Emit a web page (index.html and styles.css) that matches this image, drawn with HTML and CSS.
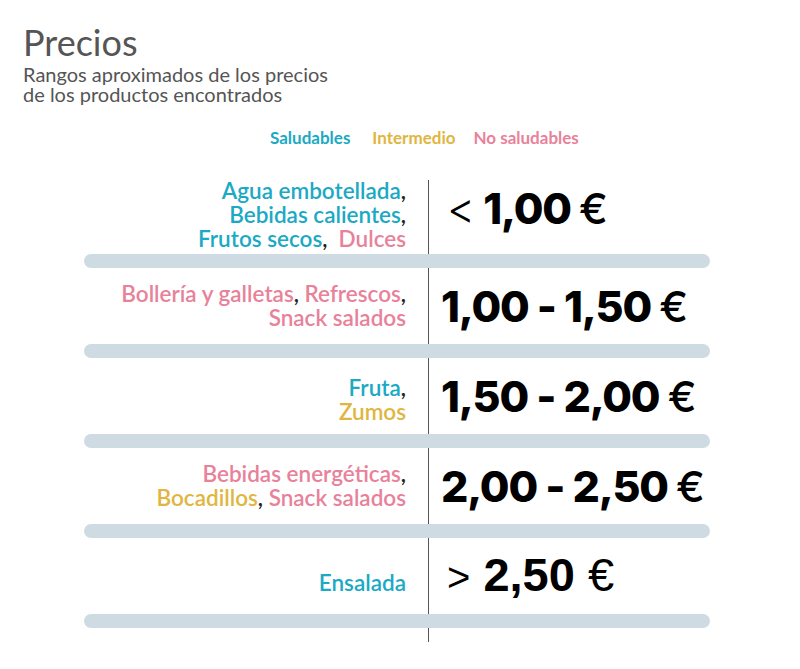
FILE: index.html
```html
<!DOCTYPE html>
<html lang="es">
<head>
<meta charset="utf-8">
<link rel="stylesheet" href="styles.css">
</head>
<body>
<header class="head">
  <h1 class="title">Precios</h1>
  <p class="subtitle">Rangos aproximados de los precios<br>de los productos encontrados</p>
</header>
<div class="legend">
  <span class="c-green">Saludables</span>
  <span class="c-yellow">Intermedio</span>
  <span class="c-pink">No saludables</span>
</div>
<section class="table">
  <div class="row row-1">
    <div class="items"><span class="c-green">Agua embotellada</span>,<br><span class="c-green">Bebidas calientes</span>,<br><span class="c-green">Frutos secos</span>,&nbsp; <span class="c-pink">Dulces</span></div>
    <div class="price"><span class="sym">&lt;</span> 1,00 <span class="eur">€</span></div>
  </div>
  <div class="bar"></div>
  <div class="row">
    <div class="items"><span class="c-pink">Bollería y galletas</span>, <span class="c-pink">Refrescos</span>,<br><span class="c-pink">Snack salados</span></div>
    <div class="price">1,00 - 1,50 <span class="eur">€</span></div>
  </div>
  <div class="bar"></div>
  <div class="row row-3">
    <div class="items"><span class="c-green">Fruta</span>,<br><span class="c-yellow">Zumos</span></div>
    <div class="price">1,50 - 2,00 <span class="eur">€</span></div>
  </div>
  <div class="bar"></div>
  <div class="row">
    <div class="items"><span class="c-pink">Bebidas energéticas</span>,<br><span class="c-yellow">Bocadillos</span>, <span class="c-pink">Snack salados</span></div>
    <div class="price">2,00 - 2,50 <span class="eur">€</span></div>
  </div>
  <div class="bar"></div>
  <div class="row row-5">
    <div class="items"><span class="c-green">Ensalada</span></div>
    <div class="price price-arial"><span class="sym">&gt;</span> 2,50 <span class="eur">€</span></div>
  </div>
  <div class="bar"></div>
</section>
</body>
</html>
```
FILE: styles.css
```css
* { box-sizing: border-box; }
body {
  margin: 0;
  background: #fff;
  font-family: Lato, "Open Sans", sans-serif;
  width: 800px;
  height: 669px;
  overflow: hidden;
}
.head { padding: 22px 0 0 23px; color: #555; }
.title {
  margin: 0;
  font-size: 36px;
  font-weight: 400;
  line-height: 40px;
}
.subtitle {
  margin: 2px 0 0 0;
  font-size: 20px;
  line-height: 20px;
}
.legend {
  display: flex;
  padding-left: 270px;
  margin-top: 24px;
  font-size: 17px;
  font-weight: 700;
  line-height: 20px;
}
.legend span:nth-child(2) { margin-left: 22px; }
.legend span:nth-child(3) { margin-left: 18px; }
.c-green { color: #1ba9c4; }
.c-yellow { color: #e0b640; }
.c-pink { color: #e8829a; }
.table {
  margin: 30px 0 0 84px;
  width: 626px;
  padding-bottom: 14px;
  background: linear-gradient(#555, #555) no-repeat 344px 2px / 1px calc(100% - 2px);
}
.row {
  display: grid;
  grid-template-columns: 344px 1fr;
  height: 76px;
}
.items {
  align-self: center;
  text-align: right;
  padding-right: 22px;
  font-size: 22.5px;
  font-weight: 600;
  line-height: 24px;
  color: #222;
}
.price {
  align-self: center;
  padding-left: 13px;
  font-family: Inter, sans-serif;
  font-weight: 800;
  font-size: 43px;
  letter-spacing: -1.2px;
  color: #000;
  white-space: nowrap;
  line-height: 50px;
}
.sym { font-weight: 300; letter-spacing: 0; margin-left: 6px; }
.eur { font-weight: 500; }
.row-1 .items { padding-bottom: 2px; }
.row-1 .price { align-self: start; padding-top: 5px; }
.row-3 .items { padding-top: 8px; }
.row-5 .items { padding-top: 14px; }
.price-arial {
  font-family: "Liberation Sans", Arial, sans-serif;
  font-weight: 700;
  font-size: 47px;
  letter-spacing: 0;
}
.price-arial .sym { font-size: 40px; }
.price-arial .eur { font-weight: 400; }
.bar {
  height: 14px;
  border-radius: 7px;
  background: #cfdbe2;
}
```
